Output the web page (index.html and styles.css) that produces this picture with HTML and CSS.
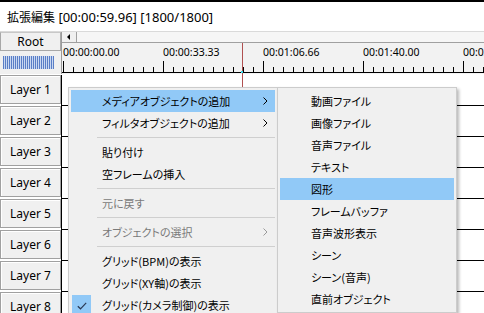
FILE: index.html
```html
<!DOCTYPE html>
<html lang="ja">
<head>
<meta charset="utf-8">
<link rel="stylesheet" href="styles.css">
</head>
<body>
<div class="title"><span class="title-ja">拡張編集</span> [00:00:59.96] [1800/1800]</div>
<div class="head">
  <div class="head-left">
    <div class="root">Root</div>
    <div class="meter"></div>
  </div>
  <div class="head-right">
    <div class="hscroll"><div class="scroll-arrow"><span class="tri"></span></div></div>
    <div class="ruler">
      <div class="labels">
        <span>00:00:00.00</span><span>00:00:33.33</span><span>00:01:06.66</span><span>00:01:40.00</span><span>00:02:13.33</span>
      </div>
    </div>
  </div>
</div>
<div class="layers">
  <div class="row"><div class="layer">Layer 1</div><div class="track"></div></div>
  <div class="row"><div class="layer">Layer 2</div><div class="track"></div></div>
  <div class="row"><div class="layer">Layer 3</div><div class="track"></div></div>
  <div class="row"><div class="layer">Layer 4</div><div class="track"></div></div>
  <div class="row"><div class="layer">Layer 5</div><div class="track"></div></div>
  <div class="row"><div class="layer">Layer 6</div><div class="track"></div></div>
  <div class="row"><div class="layer">Layer 7</div><div class="track"></div></div>
  <div class="row"><div class="layer">Layer 8</div><div class="track"></div></div>
</div>
<div class="cursor"><span class="cursor-dot"></span></div>

<div class="menu menu-main">
  <div class="item hot"><span class="label">メディアオブジェクトの追加</span><svg class="chev" width="5" height="8" viewBox="0 0 5 8"><path d="M0.5 0.5 L4 4 L0.5 7.5" fill="none" stroke="#000" stroke-width="1"/></svg></div>
  <div class="item"><span class="label">フィルタオブジェクトの追加</span><svg class="chev" width="5" height="8" viewBox="0 0 5 8"><path d="M0.5 0.5 L4 4 L0.5 7.5" fill="none" stroke="#000" stroke-width="1"/></svg></div>
  <div class="sep"></div>
  <div class="item"><span class="label">貼り付け</span></div>
  <div class="item"><span class="label">空フレームの挿入</span></div>
  <div class="sep"></div>
  <div class="item disabled"><span class="label">元に戻す</span></div>
  <div class="sep"></div>
  <div class="item disabled"><span class="label">オブジェクトの選択</span><svg class="chev" width="5" height="8" viewBox="0 0 5 8"><path d="M0.5 0.5 L4 4 L0.5 7.5" fill="none" stroke="#9a9a9a" stroke-width="1"/></svg></div>
  <div class="sep"></div>
  <div class="item"><span class="label">グリッド(BPM)の表示</span></div>
  <div class="item"><span class="label">グリッド(XY軸)の表示</span></div>
  <div class="item checked"><span class="check"><svg width="10" height="8" viewBox="0 0 10 8"><path d="M0.8 4.2 L3.5 6.8 L9.2 0.8" fill="none" stroke="#2b3a55" stroke-width="1.2"/></svg></span><span class="label">グリッド(カメラ制御)の表示</span></div>
</div>

<div class="menu menu-sub">
  <div class="item"><span class="label">動画ファイル</span></div>
  <div class="item"><span class="label">画像ファイル</span></div>
  <div class="item"><span class="label">音声ファイル</span></div>
  <div class="item"><span class="label">テキスト</span></div>
  <div class="item hot"><span class="label">図形</span></div>
  <div class="item"><span class="label">フレームバッファ</span></div>
  <div class="item"><span class="label">音声波形表示</span></div>
  <div class="item"><span class="label">シーン</span></div>
  <div class="item"><span class="label">シーン(音声)</span></div>
  <div class="item"><span class="label">直前オブジェクト</span></div>
</div>
</body>
</html>
```

FILE: styles.css
```css
* { box-sizing: border-box; }
html, body { margin: 0; padding: 0; }
body {
  width: 484px;
  height: 313px;
  overflow: hidden;
  position: relative;
  background: #ffffff;
  font-family: "Noto Sans", "Noto Sans CJK JP", sans-serif;
  font-size: 12px;
  color: #000;
}

.title {
  height: 32px;
  border-top: 2px solid #000;
  border-bottom: 1px solid #dadada;
  padding: 1px 0 0 7px;
  line-height: 28px;
  font-size: 13px;
  white-space: nowrap;
}
.title-ja {
  font-family: "Noto Sans CJK JP", sans-serif;
  font-size: 12px;
}

.head {
  display: grid;
  grid-template-columns: 61px 1fr;
  height: 42px;
  background: #f0f0f0;
}
.head-left {
  display: flex;
  flex-direction: column;
}
.root {
  height: 19px;
  border: 1px solid #a8a8a8;
  border-top-color: #c8c8c8;
  background: #f0f0f0;
  text-align: center;
  line-height: 17px;
  font-size: 12px;
}
.meter {
  margin: 5px 0 0 3px;
  width: 51px;
  height: 13px;
  background: repeating-linear-gradient(90deg, #5a7ec6 0 1px, #c9d8f1 1px 2px);
}
.head-right {
  display: flex;
  flex-direction: column;
  border-left: 1px solid #9a9a9a;
  min-width: 0;
}
.hscroll {
  height: 11px;
  border-bottom: 1px solid #a0a0a0;
  background: #f6f6f6;
  display: flex;
}
.scroll-arrow {
  width: 15px;
  height: 10px;
  border-right: 1px solid #a0a0a0;
  background: #f0f0f0;
  display: flex;
  align-items: center;
  justify-content: center;
}
.tri {
  width: 0; height: 0;
  border-top: 3px solid transparent;
  border-bottom: 3px solid transparent;
  border-right: 3px solid #000;
  margin-right: 2px;
}
.ruler {
  height: 31px;
  overflow: hidden;
  background:
    linear-gradient(#000, #000) 0 29px / 100% 1px no-repeat,
    repeating-linear-gradient(90deg, #000 0 1px, transparent 1px 100px) 1px 18px / 100% 11px no-repeat,
    repeating-linear-gradient(90deg, #000 0 1px, transparent 1px 10px) 1px 24px / 100% 5px no-repeat,
    #f2f2f2;
}
.labels {
  display: flex;
  padding-left: 1px;
  padding-top: 2px;
  font-size: 10.5px;
  line-height: 14px;
  white-space: nowrap;
}
.labels span { flex: 0 0 100px; }

.layers {
  display: flex;
  flex-direction: column;
  padding-top: 1px;
}
.row {
  display: grid;
  grid-template-columns: 61px 1fr;
  height: 31px;
  flex: 0 0 31px;
}
.layer {
  height: 29px;
  border: 1px solid #a0a0a0;
  box-shadow: inset 1px 1px 0 #fff;
  background: #f0f0f0;
  text-align: center;
  line-height: 27px;
  font-size: 12px;
  white-space: pre;
}
.track {
  border-left: 1px solid #000;
  border-bottom: 1px solid #000;
  background: #fff;
}

.cursor {
  position: absolute;
  left: 242px;
  top: 43px;
  bottom: 0;
  width: 1px;
  background: #b05050;
}
.cursor-dot {
  position: absolute;
  left: -1px;
  top: 28px;
  width: 2px;
  height: 2px;
  background: #3ed8e8;
}

.menu {
  position: absolute;
  top: 87px;
  background: #f0f0f0;
  border: 1px solid #cccccc;
  padding: 2px;
  box-shadow: 2px 2px 3px rgba(0,0,0,0.28);
  font-family: "Noto Sans CJK JP", sans-serif;
  font-feature-settings: "palt";
  font-size: 11px;
}
.menu-main { left: 68px; width: 210px; }
.menu-sub { left: 277px; width: 180px; }
.item {
  height: 22px;
  display: flex;
  align-items: center;
  padding-left: 31px;
  padding-right: 7px;
  position: relative;
  white-space: nowrap;
}
.item.hot { background: #91c9f7; }
.item.disabled { color: #7a7a7a; }
.chev { margin-left: auto; }
.sep {
  height: 7px;
  margin-left: 26px;
  background: linear-gradient(#cfcfcf, #cfcfcf) 0 3px / 100% 1px no-repeat;
}
.check {
  position: absolute;
  left: 1px;
  top: 1px;
  width: 19px;
  height: 21px;
  background: #91c9f7;
  display: flex;
  align-items: center;
  justify-content: center;
}
```
